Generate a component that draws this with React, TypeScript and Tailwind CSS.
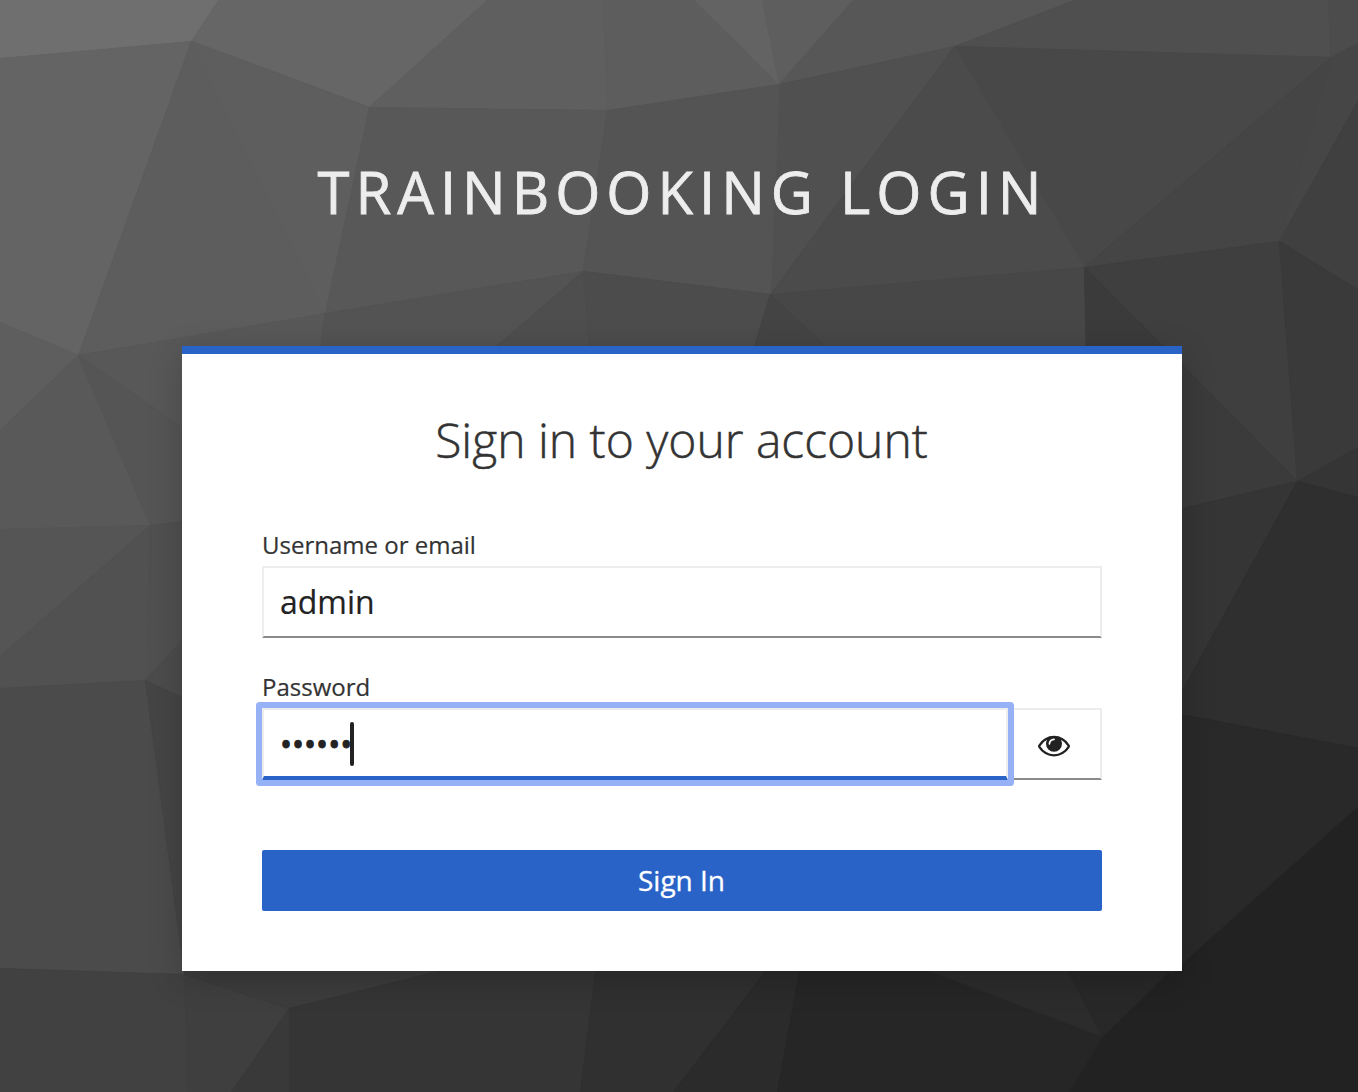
const facets: [string, string][] = [
  ["0,0 218,0 191,41 0,58", "#6f6f6f"],
  ["0,58 191,41 78,355 0,322", "#646464"],
  ["218,0 487,0 369,107 191,41", "#666666"],
  ["487,0 603,0 607,110 369,107", "#5f5f5f"],
  ["603,0 695,0 779,84 607,110", "#5d5d5d"],
  ["695,0 762,0 779,84", "#636363"],
  ["762,0 853,0 779,84", "#5e5e5e"],
  ["853,0 1074,0 954,46 779,84", "#575757"],
  ["1074,0 1328,0 1331,57 954,46", "#4f4f4f"],
  ["1328,0 1358,0 1358,43 1331,57", "#4c4c4c"],
  ["954,46 1331,57 1084,267", "#484848"],
  ["1331,57 1279,241 1084,267", "#454545"],
  ["1331,57 1358,43 1358,100 1279,241", "#464646"],
  ["1358,100 1358,290 1279,241", "#404040"],
  ["779,84 954,46 770,294", "#505050"],
  ["954,46 1084,267 770,294", "#4b4b4b"],
  ["191,41 369,107 325,313 78,355", "#5d5d5d"],
  ["191,41 369,107 325,313", "#5e5e5e"],
  ["369,107 607,110 583,271 325,313", "#585858"],
  ["607,110 779,84 770,294 583,271", "#545454"],
  ["78,355 325,313 318,440 200,440", "#585858"],
  ["325,313 583,271 480,360 318,360", "#535353"],
  ["583,271 590,360 480,360", "#4e4e4e"],
  ["583,271 770,294 750,360 590,360", "#4c4c4c"],
  ["770,294 1084,267 1089,360 750,360", "#474747"],
  ["770,294 840,360 750,360", "#444444"],
  ["1084,267 1279,241 1297,481", "#3f3f3f"],
  ["1084,267 1297,481 1182,508 1089,508", "#3b3b3b"],
  ["1279,241 1358,290 1358,447 1297,481", "#3a3a3a"],
  ["1297,481 1358,447 1358,497", "#353535"],
  ["1297,481 1182,508 1150,512 1150,758", "#353535"],
  ["1297,481 1358,497 1358,748 1170,712", "#2f2f2f"],
  ["1170,712 1358,748 1358,805 1170,973", "#292929"],
  ["0,322 78,355 0,430", "#5e5e5e"],
  ["78,355 150,525 0,529 0,430", "#595959"],
  ["78,355 200,440 200,519 150,525", "#555555"],
  ["150,525 0,656 0,529", "#555555"],
  ["150,525 145,680 0,688 0,656", "#515151"],
  ["150,525 200,519 200,620 145,680", "#505050"],
  ["145,680 200,620 200,706", "#4c4c4c"],
  ["0,688 145,680 184,974 0,968", "#4b4b4b"],
  ["145,680 200,706 200,974 184,974", "#454545"],
  ["0,968 184,974 188,1092 0,1092", "#414141"],
  ["184,974 289,1008 231,1092 188,1092", "#3f3f3f"],
  ["184,974 184,950 520,950 289,1008", "#3c3c3c"],
  ["289,1008 231,1092 289,1092", "#393939"],
  ["289,1008 434,972 520,950 598,950 580,1092 289,1092", "#353535"],
  ["598,950 781,950 673,1092 580,1092", "#303030"],
  ["781,950 803,950 777,1092 673,1092", "#2b2b2b"],
  ["803,950 893,950 1102,1036 1068,1092 777,1092", "#262626"],
  ["876,950 1057,950 1102,1036", "#2c2c2c"],
  ["1057,950 1190,950 1102,1036", "#282828"],
];

function Backdrop() {
  return (
    <svg className="absolute inset-0 h-[1092px] w-[1358px]" viewBox="0 0 1358 1092" aria-hidden="true">
      <rect width="1358" height="1092" fill="#222222" />
      <g transform="translate(0.5 0.5)">
        {facets.map(([points, fill]) => (
          <polygon key={points} points={points} fill={fill} stroke={fill} strokeWidth="1.2" strokeLinejoin="round" />
        ))}
      </g>
    </svg>
  );
}

function EyeIcon() {
  return (
    <svg className="mt-px size-8" viewBox="0 0 1792 1792" fill="#222222" aria-hidden="true">
      <path d="M1664 960q-152-236-381-353 61 104 61 225 0 185-131.5 316.5t-316.5 131.5-316.5-131.5-131.5-316.5q0-121 61-225-229 117-381 353 133 205 333.5 326.5t434.5 121.5 434.5-121.5 333.5-326.5zm-720-384q0-20-14-34t-34-14q-125 0-214.5 89.5t-89.5 214.5q0 20 14 34t34 14 34-14 14-34q0-86 61-147t147-61q20 0 34-14t14-34zm848 384q0 34-20 69-140 230-376.5 368.5t-499.5 138.5-499.5-139-376.5-368q-20-35-20-69t20-69q140-229 376.5-368t499.5-139 499.5 139 376.5 368q20 35 20 69z" />
    </svg>
  );
}

export default function App() {
  return (
    <div className="relative flex h-[1092px] w-[1358px] flex-col overflow-hidden font-['Open_Sans',sans-serif]">
      <Backdrop />
      <header className="relative flex h-[346px] shrink-0 justify-center pt-[152px] pl-[7px]">
        <h1 className="text-[58px] leading-[80px] font-normal tracking-[6px] whitespace-nowrap text-[#ededed] uppercase [-webkit-text-stroke:0.8px_#ededed]">
          TrainBooking Login
        </h1>
      </header>
      <main className="relative ml-[182px] flex h-[625px] w-[1000px] flex-col border-t-8 border-[#2963c8] bg-white px-20 shadow-[0_8px_32px_rgba(0,0,0,0.2)]">
        <h2 className="mt-[50px] h-[72px] pr-px text-center text-[48px] leading-[72px] font-light whitespace-nowrap text-[#333333] [-webkit-text-stroke:0.5px_#333333]">
          Sign in to your account
        </h2>
        <form className="mt-[51px] flex flex-col" onSubmit={(e) => e.preventDefault()}>
          <label className="h-[39px] text-[24px] leading-[36px] text-[#333333] [-webkit-text-stroke:0.2px_#333333]">
            Username or email
          </label>
          <div className="flex h-[72px] items-center rounded-[1px] border-2 border-[#ededed] border-b-[#8b8b8b] px-4 text-[32px] text-[#222222] [-webkit-text-stroke:0.2px_#222222]">
            admin
          </div>
          <label className="mt-[31px] h-[39px] text-[24px] leading-[36px] text-[#333333] [-webkit-text-stroke:0.2px_#333333]">
            Password
          </label>
          <div className="flex h-[72px]">
            <div className="z-10 flex w-[746px] items-center rounded-[1px] border-2 border-b-4 border-[#ededed] border-b-[#2963c8] px-4 pt-0.5 text-[32px] text-[#222222] shadow-[0_0_0_6px_#97b1f6]">
              <span className="leading-none [-webkit-text-stroke:0.9px_#222222]">••••••</span>
              <span className="-ml-0.5 h-11 w-1 rounded-sm bg-[#222222]" />
            </div>
            <button
              type="button"
              aria-label="Show password"
              className="flex flex-1 items-center justify-center border-2 border-l-0 border-[#ededed] border-b-[#8b8b8b]"
            >
              <EyeIcon />
            </button>
          </div>
          <button
            type="submit"
            className="mt-[70px] h-[61px] rounded-[2px] bg-[#2963c8] pr-px pb-0.5 text-[28px] text-white [-webkit-text-stroke:0.3px_#ffffff]"
          >
            Sign In
          </button>
        </form>
      </main>
    </div>
  );
}
